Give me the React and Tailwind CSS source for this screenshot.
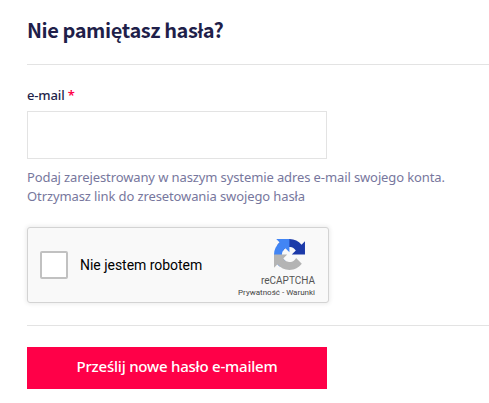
import { useState } from "react";

function CaptchaLogo() {
  return (
    <svg className="w-[31px] h-[31px]" viewBox="0 0 64 64">
      <path fill="#1c3aa9" d="M64 31.955l-.033-1.37V4.687l-7.16 7.16C50.948 4.674 42.033.093 32.05.093c-10.4 0-19.622 4.96-25.458 12.64l11.736 11.86a15.55 15.55 0 0 1 4.754-5.334c2.05-1.6 4.952-2.906 8.968-2.906.485 0 .86.057 1.135.163 4.976.393 9.288 3.14 11.828 7.124l-8.307 8.307L64 31.953" />
      <path fill="#4285f4" d="M31.862.094l-1.37.033H4.594l7.16 7.16C4.58 13.147 0 22.06 0 32.046c0 10.4 4.96 19.622 12.64 25.458L24.5 45.768a15.55 15.55 0 0 1-5.334-4.754c-1.6-2.05-2.906-4.952-2.906-8.968 0-.485.057-.86.163-1.135.393-4.976 3.14-9.288 7.124-11.828l8.307 8.307L31.86.095" />
      <path fill="#b4b4b4" d="M.001 32.045l.033 1.37v25.898l7.16-7.16c5.86 7.173 14.774 11.754 24.76 11.754 10.4 0 19.622-4.96 25.458-12.64l-11.736-11.86a15.55 15.55 0 0 1-4.754 5.334c-2.05 1.6-4.952 2.906-8.968 2.906-.485 0-.86-.057-1.135-.163-4.976-.393-9.288-3.14-11.828-7.124l8.307-8.307c-10.522.04-22.4.066-27.295-.005" />
    </svg>
  );
}

function Captcha({ checked, onChange }) {
  return (
    <div className="flex w-[302px] h-[76px] mt-[21px] bg-[#f9f9f9] border border-[#d3d3d3] rounded-[3px] shadow-[0_0_4px_1px_rgba(0,0,0,0.08)] font-['Roboto',sans-serif]">
      <label className="flex flex-1 items-center pl-3">
        <input type="checkbox" checked={checked} onChange={onChange}
          className="appearance-none w-7 h-7 bg-white border-2 border-[#c1c1c1] rounded-xs checked:bg-[#4285f4]" />
        <span className="ml-3 text-sm tracking-[-0.03px] text-black">Nie jestem robotem</span>
      </label>
      <div className="flex flex-col items-end pt-[11px] pr-[13px] whitespace-nowrap text-[#555]">
        <div className="pr-2.5"><CaptchaLogo /></div>
        <div className="mt-1.5 text-[10px] leading-[10px]">reCAPTCHA</div>
        <div className="mt-[3px] text-[8px] leading-[8px] text-[#444]">
          <a href="#prywatnosc">Prywatność</a> - <a href="#warunki">Warunki</a>
        </div>
      </div>
    </div>
  );
}

export default function App() {
  const [email, setEmail] = useState("");
  const [robot, setRobot] = useState(false);

  return (
    <div className="min-h-screen bg-white overflow-hidden pl-[27px] pt-[15px] font-['Noto_Sans',sans-serif] text-[#1f1f4a]">
      <h1 className="h-[30px] leading-[30px] whitespace-nowrap text-[20px] tracking-[-0.42px] font-semibold font-['Noto_Sans_CJK_SC','Noto_Sans',sans-serif]">Nie pamiętasz hasła?</h1>

      <form onSubmit={(e) => e.preventDefault()} className="mt-[19px] border-t border-[#e3e3e3] pt-5">
        <label htmlFor="email" className="block h-5 leading-5 text-[13px] tracking-[-0.15px] font-medium">
          e-mail <span className="font-semibold text-[#ff0048]">*</span>
        </label>
        <input id="email" type="email" value={email} onChange={(e) => setEmail(e.target.value)}
          className="block w-[300px] h-12 mt-1.5 px-3 border border-[#e3e3e3] text-sm outline-none" />
        <p className="mt-[9px] w-[440px] whitespace-nowrap text-[13px] leading-[19px] tracking-[-0.11px] text-[#77779d]">
          Podaj zarejestrowany w naszym systemie adres e-mail swojego konta.<br />
          Otrzymasz link do zresetowania swojego hasła
        </p>

        <Captcha checked={robot} onChange={(e) => setRobot(e.target.checked)} />

        <div className="mt-[22px] border-t border-[#e3e3e3] pt-[21px]">
          <button type="submit" className="block w-[300px] h-[42px] pb-[3px] bg-[#ff0048] text-white text-[15px] tracking-[-0.22px] font-medium whitespace-nowrap">
            Prześlij nowe hasło e-mailem
          </button>
        </div>
      </form>
    </div>
  );
}
